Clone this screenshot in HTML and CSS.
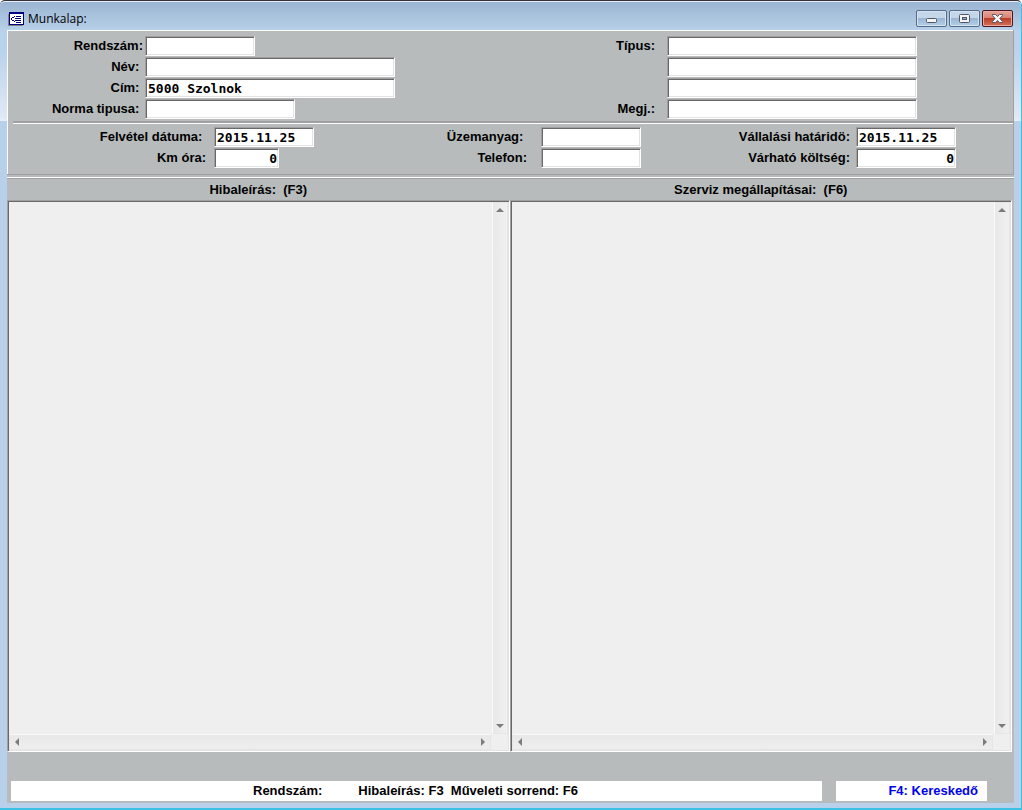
FILE: index.html
```html
<!DOCTYPE html>
<html lang="hu">
<head>
<meta charset="utf-8">
<title>Munkalap</title>
<link rel="stylesheet" href="styles.css">
</head>
<body>
<div class="window">
  <header class="titlebar">
    <svg class="app-icon" width="16" height="14" viewBox="0 0 16 14" shape-rendering="crispEdges">
      <path fill="#808080" d="M0 2h1v12H0zM0 13h15v1H0z"/>
      <path fill="#000080" d="M1 0h15v13H1z"/>
      <path fill="#fff" d="M2 2h13v10H2z"/>
      <path fill="#000080" d="M6 4h1v1H6zM8 4h5v1H8zM4 5h2v1H4zM3 6h1v2H3zM7 6h6v1H7zM4 8h2v1H4zM7 8h6v1H7zM6 9h1v1H6zM8 10h5v1H8z"/>
    </svg>
    <h1 class="title">Munkalap:</h1>
    <div class="controls">
      <button class="ctl" type="button" aria-label="Kis méret">
        <svg width="13" height="11" viewBox="0 0 13 11"><rect x="1.500" y="5.500" width="10" height="4" rx="1" fill="#f4f4f4" stroke="#535666"/></svg>
      </button>
      <button class="ctl" type="button" aria-label="Teljes méret">
        <svg width="13" height="11" viewBox="0 0 13 11"><rect x="1.500" y="1.500" width="10" height="8" rx="1" fill="#f4f4f4" stroke="#535666"/><rect x="4.500" y="4.500" width="4" height="2" fill="#8fb0d0" stroke="#535666"/></svg>
      </button>
      <button class="ctl ctl-close" type="button" aria-label="Bezárás">
        <svg width="13" height="11" viewBox="0 0 13 11"><path d="M1.500 1.500h3l2 2 2-2h3v1L8.800 5.500l2.700 3v1h-3l-2-2-2 2h-3v-1l2.700-3L1.500 2.500z" fill="#f8f8f8" stroke="#535666"/></svg>
      </button>
    </div>
  </header>

  <main class="client">
    <form class="sheet">
      <div class="customer">
        <label class="c1" for="rendszam">Rendszám:</label><input class="w-s" id="rendszam" type="text">
        <label class="c3" for="tipus">Típus:</label><input id="tipus" type="text">
        <label class="c1" for="nev">Név:&nbsp;</label><input id="nev" type="text">
        <input class="c4" type="text" aria-label="Típus 2">
        <label class="c1" for="cim">Cím:&nbsp;</label><input id="cim" type="text" value="5000 Szolnok">
        <input class="c4" type="text" aria-label="Típus 3">
        <label class="c1" for="norma">Norma tipusa:&nbsp;</label><input class="w-m" id="norma" type="text">
        <label class="c3" for="megj">Megj.:</label><input id="megj" type="text">
      </div>
      <div class="order">
        <label class="p-m" for="felvetel">Felvétel dátuma:&nbsp;</label><input id="felvetel" type="text" value="2015.11.25">
        <label class="p-l" for="uzem">Üzemanyag:&nbsp;</label><input id="uzem" type="text">
        <label class="p-s" for="hatarido">Vállalási határidö:</label><input id="hatarido" type="text" value="2015.11.25">
        <label class="p-m" for="km">Km óra:</label><input class="num w-n" id="km" type="text" value="0">
        <label class="p-l" for="telefon">Telefon:</label><input id="telefon" type="text">
        <label class="p-s" for="koltseg">Várható költség:</label><input class="num" id="koltseg" type="text" value="0">
      </div>
    </form>

    <div class="notes">
      <section class="note">
        <label class="note-title" for="hiba">Hibaleírás:  (F3)</label>
        <div class="pane">
          <textarea id="hiba"></textarea>
          <div class="vbar">
            <button type="button" aria-label="Fel"><svg width="8" height="4" viewBox="0 0 8 4"><path d="M0 4 4 0l4 4z"/></svg></button>
            <button type="button" aria-label="Le"><svg width="8" height="4" viewBox="0 0 8 4"><path d="M0 0h8L4 4z"/></svg></button>
          </div>
          <div class="hbar">
            <button type="button" aria-label="Balra"><svg width="4" height="8" viewBox="0 0 4 8"><path d="M4 0v8L0 4z"/></svg></button>
            <button type="button" aria-label="Jobbra"><svg width="4" height="8" viewBox="0 0 4 8"><path d="M0 0v8l4-4z"/></svg></button>
          </div>
        </div>
      </section>
      <section class="note">
        <label class="note-title" for="szerviz">Szerviz megállapításai:  (F6)</label>
        <div class="pane">
          <textarea id="szerviz"></textarea>
          <div class="vbar">
            <button type="button" aria-label="Fel"><svg width="8" height="4" viewBox="0 0 8 4"><path d="M0 4 4 0l4 4z"/></svg></button>
            <button type="button" aria-label="Le"><svg width="8" height="4" viewBox="0 0 8 4"><path d="M0 0h8L4 4z"/></svg></button>
          </div>
          <div class="hbar">
            <button type="button" aria-label="Balra"><svg width="4" height="8" viewBox="0 0 4 8"><path d="M4 0v8L0 4z"/></svg></button>
            <button type="button" aria-label="Jobbra"><svg width="4" height="8" viewBox="0 0 4 8"><path d="M0 0v8l4-4z"/></svg></button>
          </div>
        </div>
      </section>
    </div>

    <footer class="status">
      <div class="hints"><span>Rendszám:</span><span>Hibaleírás: F3  Műveleti sorrend: F6</span></div>
      <div class="dealer">F4: Kereskedő</div>
    </footer>
  </main>
</div>
</body>
</html>
```
FILE: styles.css
```css
* { box-sizing: border-box; }

body {
  margin: 0;
  font: bold 13px/20px "Liberation Sans", Arial, sans-serif;
  color: #000;
}

.window {
  display: flex;
  flex-direction: column;
  min-height: 100vh;
  padding: 0 7px 5px 7px;
  border-top: 1px solid #36303a;
  border-right: 1px solid #3cc0e4;
  border-bottom: 2px solid #3cc0e4;
  border-radius: 5px 5px 0 0;
  background:
    linear-gradient(#99b4d1, #b9d1ea 30px, #bad2ec 50px, #dfe9f5 116px, #e6eef8 120px, #b9d0ea 120px);
  box-shadow: inset 0 1px #e8f1fa;
}

.titlebar {
  display: flex;
  align-items: center;
  height: 29px;
  padding: 6px 1px 0 1px;
}

.app-icon { flex: none; margin-right: 4px; }

.title {
  flex: 1;
  margin: 0;
  font: 12px/20px "Open Sans", "Noto Sans", sans-serif;
}

.controls { display: flex; gap: 2px; }

.ctl {
  display: flex;
  align-items: center;
  justify-content: center;
  width: 31px;
  height: 17px;
  padding: 0;
  border: 1px solid #566b88;
  border-radius: 2px;
  background: linear-gradient(#c3d6ea 0 45%, #9ab6d3 50%, #b4cfe8);
  box-shadow: inset 0 0 0 1px #d4e3f2;
}

.ctl-close {
  border-color: #4e1420;
  background: linear-gradient(#e6a598, #d98474 45%, #bb3f26 50%, #d27259);
  box-shadow: inset 0 0 0 1px #e9aba0;
}

.client {
  flex: 1;
  display: flex;
  flex-direction: column;
  background: #b7bbbb;
}

.sheet {
  border: 1px solid #a0a0a0;
  border-width: 0 1px 1px 0;
  box-shadow: inset 1px 1px #fff;
}

.customer {
  display: grid;
  grid-template-columns: 132px 250px 1fr 250px 96px;
  gap: 1px 0;
  margin-left: 6px;
  padding: 6px 0 2px;
  border-bottom: 2px solid #a0a0a0;
}

.order {
  display: grid;
  grid-template-columns: 207px 100px 227fr 100px 215fr 100px 57px;
  gap: 1px 0;
  padding-bottom: 6px;
}

.order::before {
  content: "";
  grid-column: 1 / -1;
  height: 1px;
  margin: 0 0 2px 6px;
  background: #fff;
}

label { text-align: right; white-space: pre; }

.c1 { grid-column: 1; padding-right: 2px; }
.c3 { padding-right: 12px; }
.c4 { grid-column: 4; }

.p-s { padding-right: 6px; }
.p-m { padding-right: 8px; }
.p-l { padding-right: 14px; }
.order label:nth-of-type(3n + 1) { grid-column: 1; }

input {
  width: 100%;
  height: 20px;
  padding: 0 1px 0 2px;
  border: 1px solid;
  border-color: #a0a0a0 #fff #fff #a0a0a0;
  background: #fff;
  box-shadow: inset 1px 1px #696969, inset -1px -1px #e3e3e3;
  font: bold 13px/18px "DejaVu Sans Mono", "Liberation Mono", monospace;
  color: #000;
}

.w-s { width: 110px; }
.w-m { width: 150px; }
.w-n { width: 65px; }
.num { text-align: right; }

.notes {
  flex: 1;
  display: grid;
  grid-template-columns: 1fr 1fr;
  margin-top: 2px;
  padding-right: 2px;
  border-top: 1px solid #fff;
  box-shadow: inset 0 1px #a0a0a0;
}

.note { display: flex; flex-direction: column; }

.note-title {
  padding-top: 2px;
  text-align: center;
}

.pane {
  flex: 1;
  display: grid;
  grid-template: 1fr 16px / 1fr 16px;
  padding: 1px;
  border: 1px solid;
  border-color: #a0a0a0 #fff #fff #a0a0a0;
  background: #efefef;
  box-shadow: inset 1px 1px #696969, inset -1px -1px #e3e3e3;
}

textarea {
  width: 100%;
  height: 100%;
  padding: 2px;
  border: 0;
  background: none;
  resize: none;
  overflow: hidden;
  font: bold 13px/18px "DejaVu Sans Mono", monospace;
}

.vbar, .hbar {
  display: flex;
  justify-content: space-between;
  border: 1px solid #e6e6e6;
}

.vbar {
  flex-direction: column;
  border-left-color: #fafafa;
  background: linear-gradient(90deg, #e8e8e8, #f0f0f0);
}

.hbar {
  margin-right: 1px;
  border-top-color: #fafafa;
  background: linear-gradient(#e8e8e8, #eee);
}

.vbar button, .hbar button {
  display: flex;
  align-items: center;
  justify-content: center;
  width: 14px;
  height: 14px;
  padding: 0;
  border: 0;
  background: none;
  fill: #7c7c7c;
}

.status {
  display: flex;
  gap: 14px;
  padding: 29px 27px 2px 4px;
  white-space: pre;
}

.hints {
  flex: 1;
  display: flex;
  gap: 36px;
  padding-left: 242px;
  background: #fff;
}

.dealer {
  width: 151px;
  padding-right: 9px;
  background: #fff;
  color: #0000f0;
  text-align: right;
}
```
